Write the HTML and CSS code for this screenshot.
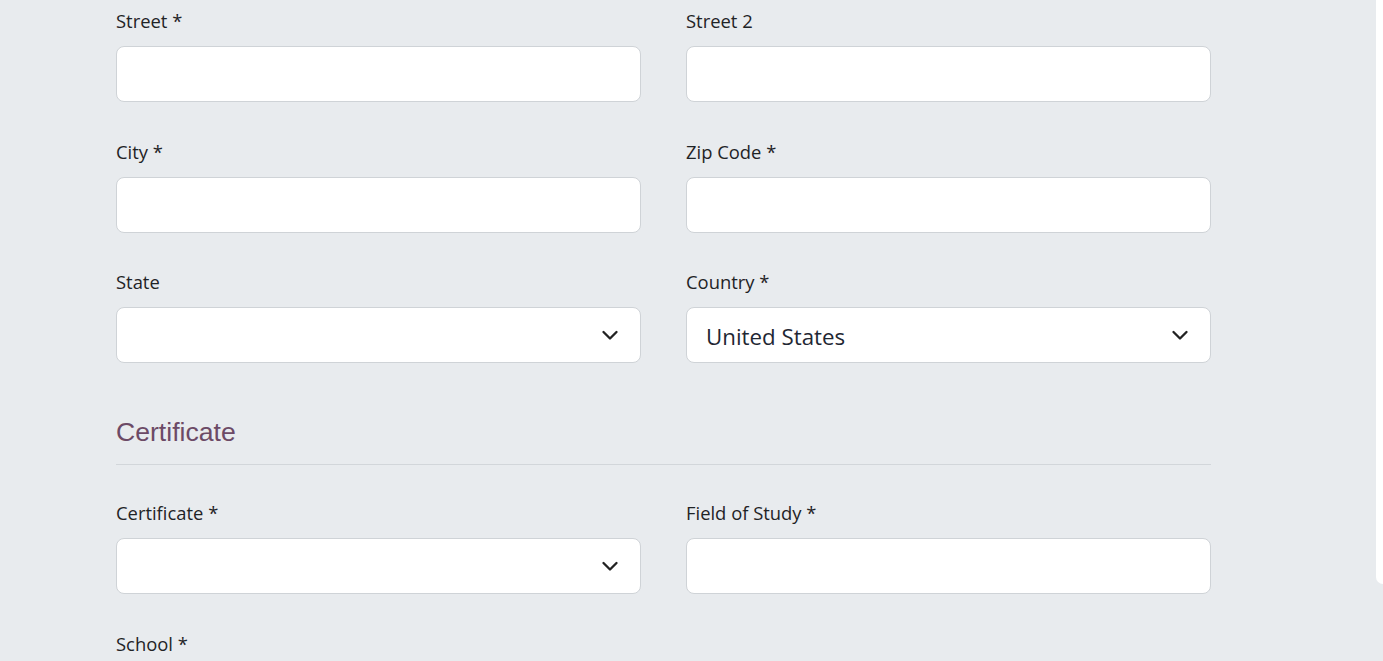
FILE: index.html
```html
<!DOCTYPE html>
<html lang="en">
<head>
<meta charset="utf-8">
<title>Form</title>
<link rel="stylesheet" href="styles.css">
</head>
<body>
<div class="page">
  <form class="form">
    <div class="grid">
      <div class="field">
        <label class="label">Street *</label>
        <div class="control"></div>
      </div>
      <div class="field">
        <label class="label">Street 2</label>
        <div class="control"></div>
      </div>
      <div class="field">
        <label class="label">City *</label>
        <div class="control"></div>
      </div>
      <div class="field">
        <label class="label">Zip Code *</label>
        <div class="control"></div>
      </div>
      <div class="field">
        <label class="label">State</label>
        <div class="control select">
          <span class="value"></span>
          <svg class="chevron" width="20" height="20" viewBox="0 0 16 16"><path d="M2.8 5.6 8 10.8l5.2-5.2" fill="none" stroke="#222" stroke-width="1.9" stroke-linecap="round" stroke-linejoin="round"/></svg>
        </div>
      </div>
      <div class="field">
        <label class="label">Country *</label>
        <div class="control select">
          <span class="value">United States</span>
          <svg class="chevron" width="20" height="20" viewBox="0 0 16 16"><path d="M2.8 5.6 8 10.8l5.2-5.2" fill="none" stroke="#222" stroke-width="1.9" stroke-linecap="round" stroke-linejoin="round"/></svg>
        </div>
      </div>
    </div>

    <h2 class="section-title">Certificate</h2>

    <div class="grid">
      <div class="field">
        <label class="label">Certificate *</label>
        <div class="control select">
          <span class="value"></span>
          <svg class="chevron" width="20" height="20" viewBox="0 0 16 16"><path d="M2.8 5.6 8 10.8l5.2-5.2" fill="none" stroke="#222" stroke-width="1.9" stroke-linecap="round" stroke-linejoin="round"/></svg>
        </div>
      </div>
      <div class="field">
        <label class="label">Field of Study *</label>
        <div class="control"></div>
      </div>
      <div class="field">
        <label class="label">School *</label>
        <div class="control"></div>
      </div>
    </div>
  </form>
  <div class="side-panel"></div>
</div>
</body>
</html>
```

FILE: styles.css
```css
html, body {
  margin: 0;
  padding: 0;
  background: #e8ebee;
  overflow: hidden;
}

.page {
  position: relative;
  height: 661px;
  font-family: "Open Sans", "Noto Sans", sans-serif;
  color: #212529;
}

.form {
  width: 1095px;
  padding: 8px 0 0 116px;
}

.grid {
  display: grid;
  grid-template-columns: 525px 525px;
  column-gap: 45px;
  row-gap: 36.5px;
}

.label {
  display: block;
  font-size: 18.4px;
  line-height: 26px;
  height: 26px;
  margin-bottom: 12px;
  color: #1f2326;
}

.control {
  box-sizing: border-box;
  height: 56px;
  background: #ffffff;
  border: 1px solid #cfd3d7;
  border-radius: 8px;
}

.select {
  display: flex;
  align-items: center;
  justify-content: space-between;
  padding: 0 20px 0 19px;
}

.value {
  font-size: 22.3px;
  color: #1f2733;
  padding-top: 2px;
}

.chevron {
  flex: none;
}

.section-title {
  margin: 53px 0 35px;
  padding-bottom: 16px;
  border-bottom: 1px solid #d2d6da;
  font-family: "Liberation Sans", Arial, sans-serif;
  font-weight: 400;
  font-size: 26.6px;
  line-height: 32px;
  color: #6c4a66;
}

.side-panel {
  position: absolute;
  top: 0;
  right: 0;
  width: 7px;
  height: 584px;
  background: #ffffff;
  border-bottom-left-radius: 8px;
}
```
